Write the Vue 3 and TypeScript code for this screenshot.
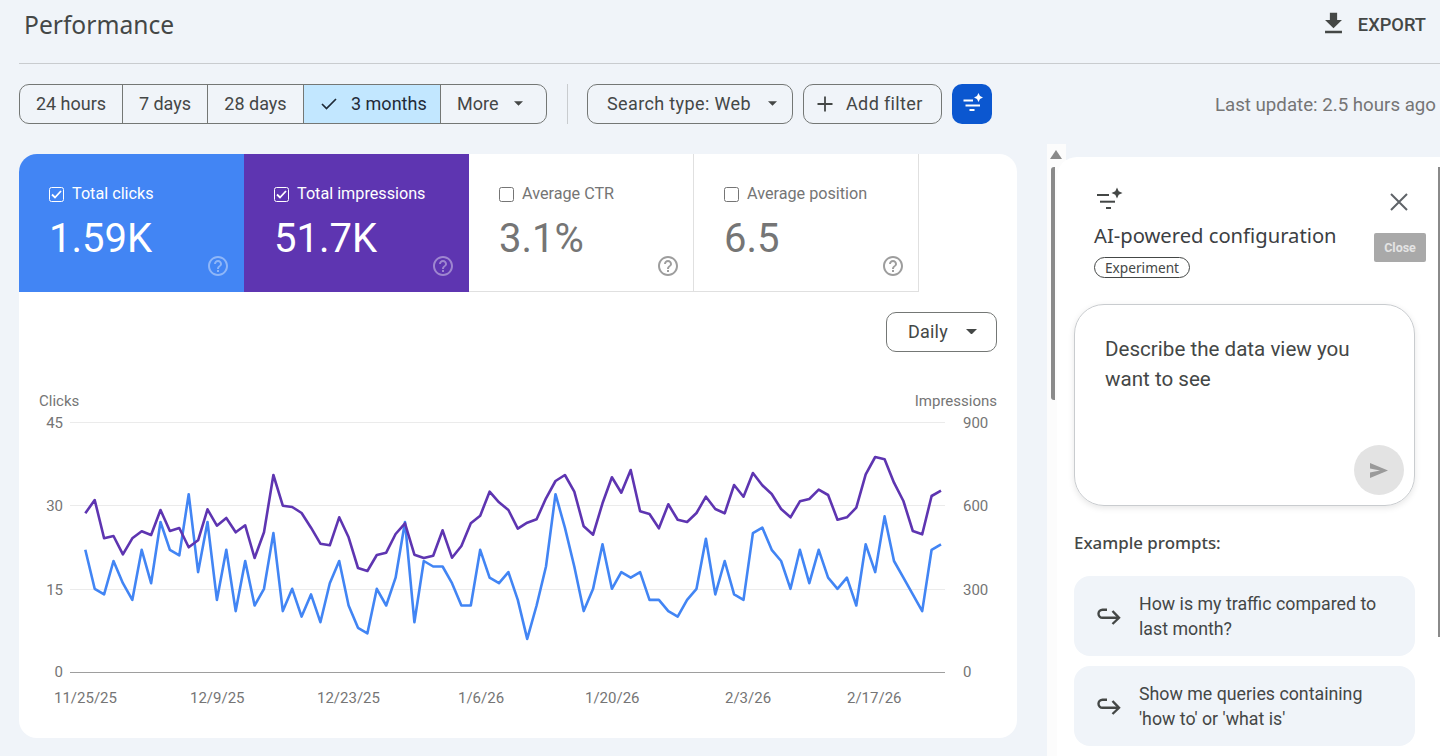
<script setup lang="ts">
const periods = [
  { label: '24 hours', w: 103 },
  { label: '7 days', w: 85 },
  { label: '28 days', w: 96 },
]

const tiles = [
  { label: 'Total clicks', value: '1.59K', cls: 'blue', on: true },
  { label: 'Total impressions', value: '51.7K', cls: 'purple', on: true },
  { label: 'Average CTR', value: '3.1%', cls: 'plain', on: false },
  { label: 'Average position', value: '6.5', cls: 'plain', on: false },
]

const clicks = [22,15,14,20,16,13,22,16,27,22,21,32,18,27,13,22,11,20,12,15,25,11,15,10,14,9,16,20,12,8,7,15,12,17,27,9,20,19,19,16,12,12,22,17,16,18,13,6,12,19,32,26,19,11,15,23,15,18,17,18,13,13,11,10,13,15,24,14,20,14,13,25,26,22,20,15,22,16,22,17,15,17,12,23,18,28,20,17,14,11,22,23]
const impressionsRaw = [220,180,295,288,343,295,274,285,210,273,264,322,301,208,257,234,277,256,354,277,105,197,201,219,263,311,316,232,292,384,393,345,338,282,250,344,354,347,271,353,318,250,227,155,187,210,266,248,238,175,123,105,155,259,284,190,112,158,90,214,222,265,193,239,246,219,170,207,220,135,170,99,136,162,207,232,184,177,149,165,239,232,203,103,51,58,128,183,273,283,168,152]

const px = (i: number) => (85.3 + 9.403 * i).toFixed(1)
const clickPoints = clicks.map((v, i) => `${px(i)},${(672.3 - v * 5.567).toFixed(1)}`).join(' ')
const impressionPoints = impressionsRaw.map((z, i) => `${px(i)},${(440 + z / 3).toFixed(1)}`).join(' ')

const grid = [
  { y: 422.5, l: '45', r: '900' },
  { y: 505.5, l: '30', r: '600' },
  { y: 589.5, l: '15', r: '300' },
]
const dates = [
  { x: 54, t: '11/25/25' },
  { x: 190, t: '12/9/25' },
  { x: 317, t: '12/23/25' },
  { x: 458, t: '1/6/26' },
  { x: 585, t: '1/20/26' },
  { x: 725, t: '2/3/26' },
  { x: 847, t: '2/17/26' },
]
const prompts = [
  ['How is my traffic compared to', 'last month?'],
  ['Show me queries containing', "'how to' or 'what is'"],
]
const helpPath = 'M11 18h2v-2h-2v2zm1-16C6.48 2 2 6.48 2 12s4.48 10 10 10 10-4.48 10-10S17.52 2 12 2zm0 18c-4.41 0-8-3.59-8-8s3.59-8 8-8 8 3.59 8 8-3.59 8-8 8zm0-14c-2.21 0-4 1.79-4 4h2c0-1.1.9-2 2-2s2 .9 2 2c0 2-3 1.75-3 5h2c0-2.25 3-2.5 3-5 0-2.21-1.79-4-4-4z'
</script>

<template>
  <div class="page">
    <header class="head">
      <h1 class="title">Performance</h1>
      <div class="export">
        <svg class="export-icon" viewBox="0 0 24 24" fill="currentColor"><path d="M19 9h-4V3H9v6H5l7 7 7-7zM5 18v2h14v-2H5z" /></svg>
        <span class="export-text">EXPORT</span>
      </div>
    </header>

    <div class="toolbar">
      <div class="segments">
        <div v-for="p in periods" :key="p.label" class="seg" :style="{ width: p.w + 'px' }">{{ p.label }}</div>
        <div class="seg seg-on">
          <svg width="16" height="12" viewBox="0 0 16 12" fill="none"><path d="M1 6l4.5 4.5L15 1" stroke="currentColor" stroke-width="1.7" /></svg>
          <span>3 months</span>
        </div>
        <div class="seg seg-more">
          <span>More</span>
          <svg class="caret" viewBox="0 0 10 5"><path d="M0 0h10L5 5z" fill="currentColor" /></svg>
        </div>
      </div>
      <div class="divider"></div>
      <div class="btn btn-search">
        <span>Search type: Web</span>
        <svg class="caret" viewBox="0 0 10 5"><path d="M0 0h10L5 5z" fill="currentColor" /></svg>
      </div>
      <div class="btn btn-add">
        <svg width="16" height="16" viewBox="0 0 16 16"><path d="M8 .5v15M.5 8h15" stroke="currentColor" stroke-width="1.8" /></svg>
        <span>Add filter</span>
      </div>
      <div class="btn-ai">
        <svg width="24" height="22" viewBox="0 0 24 22" fill="#fff">
          <rect x="3.500" y="6.500" width="9.500" height="2" />
          <rect x="5.500" y="11.500" width="14.500" height="2" />
          <rect x="9.500" y="16" width="5" height="2" />
          <path d="M18.500 0l1.500 3 3 1.500-3 1.500-1.500 3-1.500-3-3-1.500 3-1.500z" />
        </svg>
      </div>
      <div class="updated">Last update: 2.5 hours ago</div>
    </div>

    <div class="main">
      <section class="card">
        <div class="tiles">
          <div v-for="t in tiles" :key="t.label" class="tile" :class="t.cls">
            <div class="tile-label">
              <span class="check">
                <svg v-if="t.on" width="11" height="9" viewBox="0 0 11 9" fill="none"><path d="M1 4.500l3 3L10 1" stroke="#fff" stroke-width="1.800" /></svg>
              </span>
              <span>{{ t.label }}</span>
            </div>
            <div class="tile-value">{{ t.value }}</div>
            <svg class="help" viewBox="0 0 24 24" fill="currentColor"><path :d="helpPath" /></svg>
          </div>
        </div>

        <div class="chart-controls">
          <div class="daily">
            <span>Daily</span>
            <svg class="caret caret-big" viewBox="0 0 10 5"><path d="M0 0h10L5 5z" fill="currentColor" /></svg>
          </div>
        </div>

        <svg class="chart" width="998" height="356" viewBox="19 382 998 356">
          <text class="lbl" x="39" y="406">Clicks</text>
          <text class="lbl" x="997" y="406" text-anchor="end">Impressions</text>
          <g v-for="g in grid" :key="g.l">
            <line x1="70" x2="945" :y1="g.y" :y2="g.y" stroke="#ebebeb" stroke-width="1" />
            <text class="lbl" x="63" :y="g.y + 5" text-anchor="end">{{ g.l }}</text>
            <text class="lbl" x="963" :y="g.y + 5">{{ g.r }}</text>
          </g>
          <line x1="70" x2="945" y1="672.500" y2="672.500" stroke="#9e9e9e" stroke-width="1" />
          <text class="lbl" x="63" y="677" text-anchor="end">0</text>
          <text class="lbl" x="963" y="677">0</text>
          <text v-for="d in dates" :key="d.t" class="lbl" :x="d.x" y="703">{{ d.t }}</text>
          <polyline :points="clickPoints" fill="none" stroke="#4285f4" stroke-width="2.600" stroke-linejoin="round" />
          <polyline :points="impressionPoints" fill="none" stroke="#5e35b1" stroke-width="2.600" stroke-linejoin="round" />
        </svg>
      </section>

      <aside class="aside">
        <div class="track"></div>
        <div class="thumb"></div>
        <div class="arrow-up"></div>
        <div class="panel">
          <svg class="spark" width="32" height="24" viewBox="0 0 32 24" fill="#444746">
            <rect x="4" y="7" width="12" height="2" />
            <rect x="7" y="13.700" width="15" height="2" />
            <rect x="13" y="20" width="5" height="2" />
            <path d="M24 .5l1.700 3.800 3.800 1.700-3.800 1.700L24 11.500l-1.700-3.800L18.500 6l3.800-1.700z" />
          </svg>
          <svg class="close-x" width="18" height="18" viewBox="0 0 18 18"><path d="M1 1l16 16M17 1L1 17" stroke="#5f6368" stroke-width="2" /></svg>
          <div class="tooltip">Close</div>
          <h2 class="panel-title">AI-powered configuration</h2>
          <span class="chip">Experiment</span>

          <div class="describe">
            <p class="describe-text">Describe the data view you<br />want to see</p>
            <div class="send">
              <svg class="send-icon" width="18" height="15" viewBox="0 0 18 15"><path d="M0 0l18 7.500L0 15V9.500l10-2-10-2z" fill="#9a9a9a" /></svg>
            </div>
          </div>

          <div class="examples">Example prompts:</div>
          <div v-for="p in prompts" :key="p[0]" class="prompt">
            <svg class="hook" width="24" height="17" viewBox="0 0 24 17" fill="none" stroke="#444746" stroke-width="2.400">
              <path d="M10 1.800H5.500a4 4 0 0 0 0 8H21" />
              <path d="M15.500 3L22 9.800l-6.500 6.200" />
            </svg>
            <div class="prompt-text">{{ p[0] }}<br />{{ p[1] }}</div>
          </div>
        </div>
        <div class="outer-thumb"></div>
      </aside>
    </div>
  </div>
</template>

<style>
html, body { margin: 0; background: #f0f4f9; overflow: hidden; }
</style>

<style scoped>
.page {
  height: 756px;
  overflow: hidden;
  background: #f0f4f9;
  font-family: Roboto, "Liberation Sans", sans-serif;
  color: #444746;
  padding-left: 19px;
  box-sizing: border-box;
}
.head {
  height: 63px;
  border-bottom: 1px solid #c9cccf;
  display: flex;
  justify-content: space-between;
  align-items: flex-start;
}
.title {
  margin: 10px 0 0 5px;
  font-family: "Noto Sans", Roboto, sans-serif;
  font-size: 24.600px;
  line-height: 30px;
  font-weight: 400;
  color: #444746;
}
.export {
  display: flex;
  align-items: center;
  gap: 10px;
  margin: 9px 14px 0 0;
  font-size: 18.300px;
  font-weight: 500;
}
.export-text { padding-top: 1px; }
.export-icon { width: 29px; height: 29px; }
.toolbar {
  margin-top: 20px;
  height: 40px;
  display: flex;
  align-items: center;
  font-size: 18px;
}
.segments {
  display: flex;
  height: 40px;
  width: 528px;
  box-sizing: border-box;
  border: 1px solid #747775;
  border-radius: 10px;
  overflow: hidden;
}
.seg {
  box-sizing: border-box;
  border-right: 1px solid #747775;
  display: flex;
  align-items: center;
  justify-content: center;
  color: #444746;
  padding-bottom: 1px;
}
.seg-on {
  width: 137px;
  gap: 14px;
  justify-content: flex-start;
  padding-left: 17px;
  background: #c2e7ff;
  color: #1f2a37;
}
.seg-more {
  flex: 1;
  border-right: 0;
  justify-content: flex-start;
  padding-left: 16px;
  gap: 16px;
}
.caret { width: 9px; height: 5px; display: block; }
.caret-big { width: 11px; height: 5.500px; }
.divider {
  width: 1px;
  height: 40px;
  background: #c9cccf;
  margin: 0 19px 0 20px;
}
.btn {
  height: 40px;
  box-sizing: border-box;
  border: 1px solid #747775;
  border-radius: 10px;
  display: flex;
  align-items: center;
  letter-spacing: 0.37px;
  padding-bottom: 1px;
}
.btn-search { width: 206px; padding-left: 19px; gap: 17px; }
.btn-add { width: 139px; margin-left: 10px; padding-left: 13px; gap: 13px; }
.btn-ai {
  width: 40px;
  height: 40px;
  margin-left: 10px;
  border-radius: 10px;
  background: #0b57d0;
  display: flex;
  align-items: center;
  justify-content: center;
}
.updated {
  margin-left: auto;
  margin-right: 4px;
  padding-top: 1px;
  color: #757575;
  font-size: 18.700px;
}
.main {
  display: flex;
  margin-top: 30px;
  align-items: flex-start;
}
.card {
  width: 998px;
  height: 584px;
  background: #fff;
  border-radius: 18px;
  overflow: hidden;
  flex: none;
}
.tiles { display: flex; height: 138px; }
.tile {
  position: relative;
  width: 225px;
  height: 138px;
  box-sizing: border-box;
  padding: 28px 0 0 30px;
}
.blue { background: #4285f4; color: #fff; }
.purple { background: #5e35b1; color: #fff; }
.plain {
  color: #757575;
  border-right: 1px solid #e0e0e0;
  border-bottom: 1px solid #e0e0e0;
}
.tile-label {
  display: flex;
  align-items: center;
  gap: 8px;
  height: 22px;
  font-size: 16.200px;
}
.check {
  width: 15px;
  height: 15px;
  box-sizing: border-box;
  border: 1px solid currentColor;
  border-radius: 2.500px;
  display: flex;
  align-items: center;
  justify-content: center;
  margin-top: 2px;
}
.tile-value {
  margin: 11px 0 0 0;
  font-size: 40px;
  line-height: 48px;
}
.help {
  position: absolute;
  left: 187px;
  top: 99.500px;
  width: 24px;
  height: 24px;
  opacity: 0.7;
}
.blue .help, .purple .help { color: #fff; opacity: 0.4; }
.chart-controls {
  display: flex;
  justify-content: flex-end;
  padding: 20px 20px 0 0;
}
.daily {
  width: 111px;
  height: 40px;
  box-sizing: border-box;
  border: 1px solid #747775;
  border-radius: 10px;
  display: flex;
  align-items: center;
  padding-left: 21px;
  padding-bottom: 1px;
  gap: 18px;
  font-size: 18px;
  letter-spacing: 0.2px;
}
.chart { display: block; margin-top: 30px; }
.lbl { font-size: 15px; fill: #757575; font-family: Roboto, sans-serif; }
.aside {
  position: relative;
  width: 393px;
  height: 612px;
  margin: -10px 0 0 30px;
  padding: 13px 0 0 10px;
  box-sizing: border-box;
  flex: none;
}
.track {
  position: absolute;
  left: 0;
  top: 0;
  bottom: 0;
  width: 19px;
  background: #fcfcfc;
}
.thumb {
  position: absolute;
  left: 4px;
  top: 23px;
  width: 3.500px;
  height: 233px;
  background: #8a8a8a;
  border-radius: 3px 0 0 3px;
}
.arrow-up {
  position: absolute;
  z-index: 2;
  left: 3px;
  top: 6px;
  width: 0;
  height: 0;
  border-left: 6.500px solid transparent;
  border-right: 6.500px solid transparent;
  border-bottom: 9px solid #8a8a8a;
}
.outer-thumb {
  position: absolute;
  z-index: 2;
  right: 0;
  top: 23px;
  width: 2px;
  height: 470px;
  background: #8a8a8a;
}
.panel {
  position: relative;
  z-index: 1;
  height: 599px;
  background: #fff;
  border-radius: 20px 0 0 0;
  padding: 0 25px 0 17px;
  box-sizing: border-box;
}
.spark {
  position: absolute;
  left: 36px;
  top: 30px;
}
.close-x { position: absolute; left: 333px; top: 36px; }
.tooltip {
  position: absolute;
  left: 317px;
  top: 76px;
  width: 52px;
  height: 29px;
  background: #a9a9a9;
  border-radius: 2px;
  color: #e4e4e4;
  font-size: 12.500px;
  font-weight: 700;
  display: flex;
  align-items: center;
  justify-content: center;
}
.panel-title {
  margin: 0;
  padding: 64px 0 1px 20px;
  font-family: "Noto Sans", Roboto, sans-serif;
  font-size: 20.200px;
  line-height: 28px;
  font-weight: 400;
  color: #3c4043;
}
.chip {
  display: inline-flex;
  align-items: center;
  justify-content: center;
  margin: 7px 0 0 20px;
  width: 96px;
  height: 21px;
  box-sizing: border-box;
  border: 1px solid #444746;
  border-radius: 11px;
  font-family: "Noto Sans", Roboto, sans-serif;
  font-size: 13.700px;
}
.describe {
  position: relative;
  margin-top: 26px;
  height: 202px;
  box-sizing: border-box;
  border: 1px solid #c9cccf;
  border-radius: 30px;
  box-shadow: 0 2px 6px rgba(0, 0, 0, 0.1);
  padding: 29px 0 0 30px;
}
.describe-text {
  margin: 0;
  font-size: 20.600px;
  line-height: 30px;
  color: #444746;
}
.send {
  position: absolute;
  right: 10px;
  bottom: 10px;
  width: 50px;
  height: 50px;
  border-radius: 50%;
  background: #e3e3e3;
  display: flex;
  align-items: center;
  justify-content: center;
}
.send-icon { margin-right: 1px; }
.examples {
  margin-top: 26px;
  padding-bottom: 1px;
  font-family: "Noto Sans", Roboto, sans-serif;
  font-size: 16.900px;
  font-weight: 500;
  line-height: 22px;
  color: #444746;
}
.prompt {
  margin-top: 10px;
  height: 80px;
  border-radius: 16px;
  background: #f0f4f9;
  display: flex;
  align-items: center;
  padding-left: 23px;
  gap: 18px;
}
.examples + .prompt { margin-top: 21px; }
.prompt-text {
  font-size: 17.800px;
  line-height: 25px;
  color: #444746;
  padding-bottom: 1px;
}
</style>
